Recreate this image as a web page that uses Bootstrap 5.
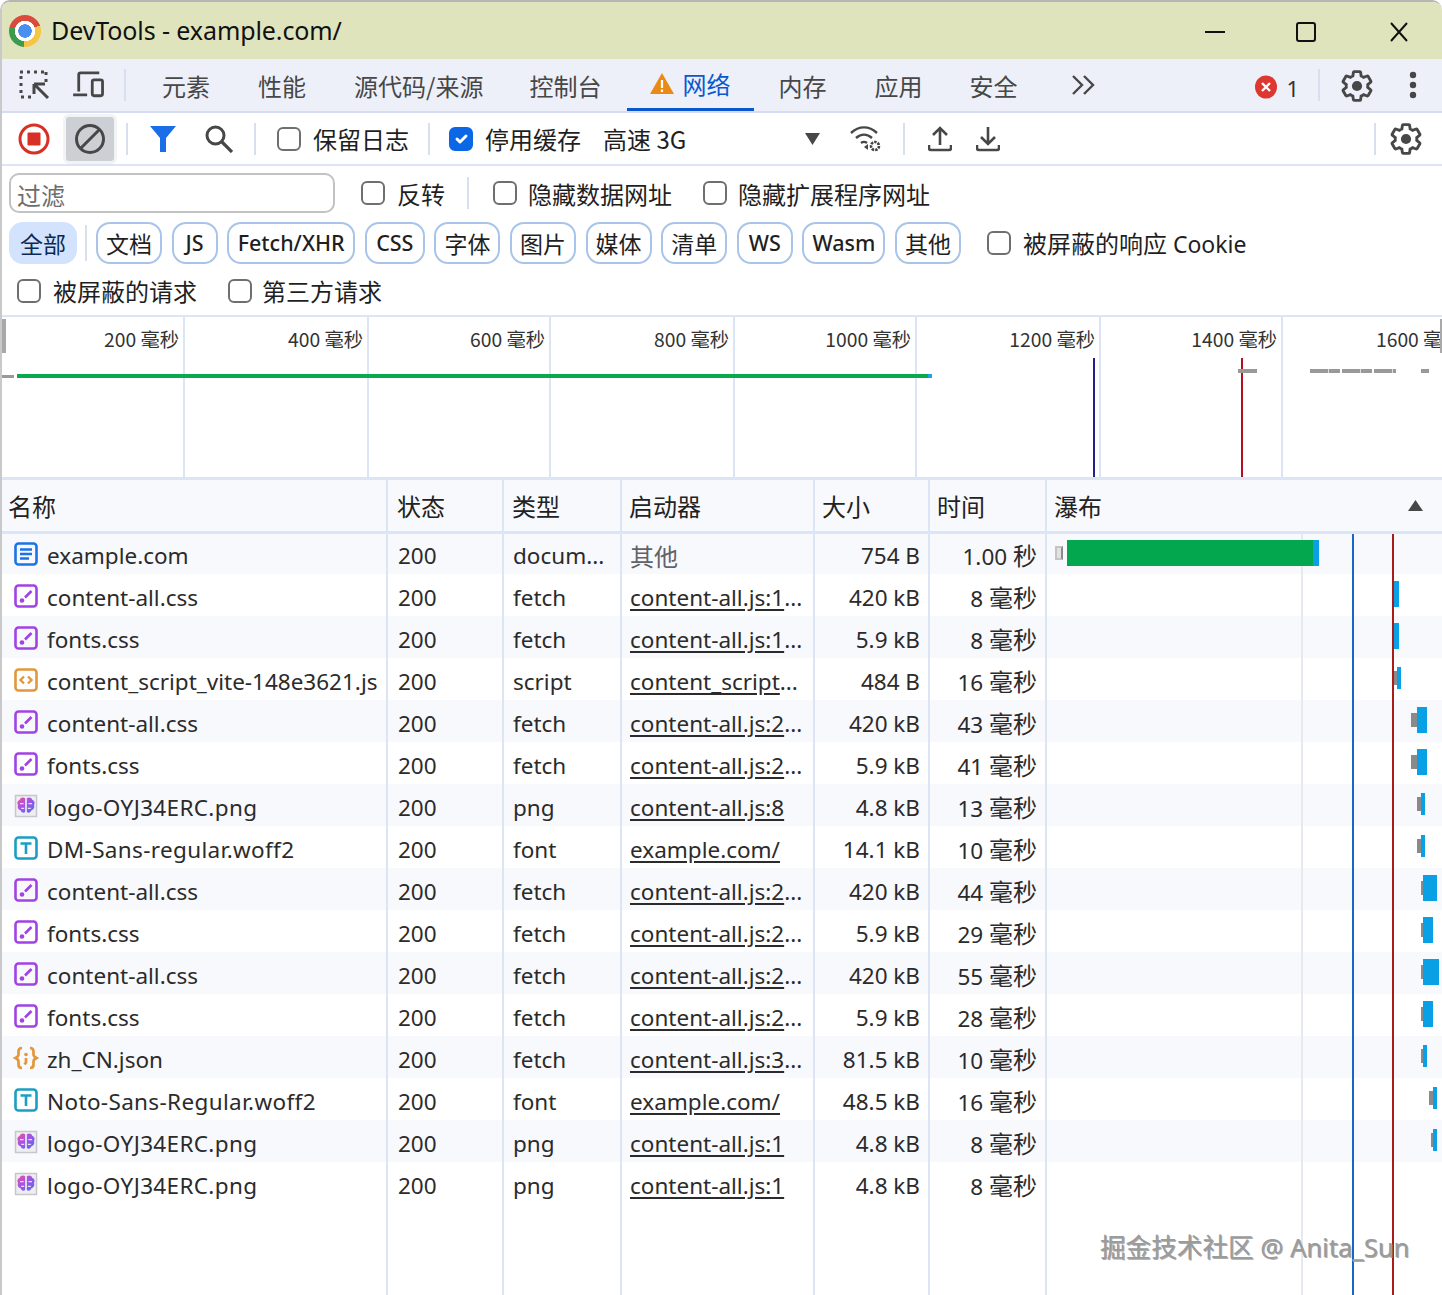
<!DOCTYPE html>
<html lang="zh-CN">
<head>
<meta charset="utf-8">
<title>DevTools - example.com/</title>
<link href="https://cdn.jsdelivr.net/npm/bootstrap@5.3.0/dist/css/bootstrap.min.css" rel="stylesheet">
<style>
html,body{height:100%;}
body{background:#fff;color:#1f1f1f;font-family:"Noto Sans","Noto Sans CJK SC",sans-serif;font-size:24px;line-height:32px;overflow:hidden;}
.zh{font-family:"Noto Sans CJK SC","Noto Sans",sans-serif;}
.app{width:1442px;height:1295px;border-left:2px solid #c9c9c9;border-top:2px solid #b5b5b5;border-radius:10px 10px 0 0;overflow:hidden;position:relative;margin:0;}
.titlebar{height:57px;background:#e0e4bd;color:#111;padding-left:7px;padding-right:33px;flex:none;}
.chrome-logo{width:32px;height:32px;border-radius:50%;flex:none;background:radial-gradient(circle,#4a8ff0 0 6.5px,#fff 7px 10px,transparent 10.5px),conic-gradient(#dc4a3c 0 70deg,#f6c544 70deg 185deg,#3b9c4e 185deg 285deg,#dc4a3c 285deg);}
.wintitle{margin-left:10px;margin-top:-2px;font-size:25px;letter-spacing:-.1px;}
.winbtn{width:20px;height:20px;color:#111;}
.winbtns{gap:71px;margin-top:3px;}
.dt-close{margin-left:2px;}
.tabbar{height:54px;background:#edf0f8;border-bottom:2px solid #d6dcf0;padding-left:16px;flex:none;}
.sep{width:2px;height:32px;background:#d8e0ef;flex:none;}
.tabitem{height:52px;padding:0 24px;color:#474747;line-height:54px;white-space:nowrap;font-size:24px;}
.tabactive{color:#0b57d0;border-bottom:3px solid #0b57d0;padding:0 24px 0 23px;}
.dt-tabshift{margin-left:-2px;margin-right:2px;}
.dt-tabshift2{margin-left:-1px;}
.ico-dark{color:#474747;}
.dt-err{margin-top:3px;}
.errcount{font-size:22px;color:#333;margin-left:9px;margin-top:5px;}
.toolbar{height:53px;border-bottom:2px solid #dbe5f5;padding-left:16px;padding-top:1px;flex:none;}
.clearbtn{width:48px;height:44px;background:#ccd0d5;border-radius:3px;box-shadow:0 0 0 3px #f1f3f5;}
.form-check-input.dt-check{width:24px;height:24px;margin:0;flex:none;border:2px solid #6f6f6f;border-radius:6px;background-color:#fff;float:none;}
.form-check-input.dt-check:checked{background-color:#0b67e6;border-color:#0b67e6;}
.checkline{display:flex;align-items:center;gap:12px;white-space:nowrap;margin:0;padding:0;min-height:0;}
.checkline.dt-gap11{gap:11px;}
.checkline.dt-gap10{gap:10px;}
.filterbar{height:50px;padding-left:7px;padding-top:4px;flex:none;}
.filterbar .checkline>span{padding-top:2px;}
.form-control.dt-filter{width:326px;height:40px;border:2px solid #c2c2c2;border-radius:10px;padding:3px 6px 0;font-size:24px;color:#222;background:#fff;}
.dt-filter::placeholder{color:#6d6d6d;opacity:1;}
.pillbar{height:52px;padding-left:7px;padding-top:4px;padding-bottom:2px;flex:none;}
.dt-pills{gap:9.6px;}
.btn.dt-pill{height:42px;padding:0;border:2px solid #a9c4ea;border-radius:14px;font-size:21.5px;font-weight:500;line-height:38px;color:#1f1f1f;background:#fff;font-family:inherit;white-space:nowrap;}
.btn.dt-pill.zh{padding:0;width:66px;font-size:23px;font-weight:400;font-family:"Noto Sans CJK SC",sans-serif;}
.btn.dt-pill.dt-pill-on{background:#d3e3fd;border-color:#d3e3fd;color:#0a2a55;width:68px;}
.btn.dt-pill.dt-w46{width:46px;}
.btn.dt-pill.dt-w128{width:128px;}
.btn.dt-pill.dt-w60{width:60px;}
.btn.dt-pill.dt-w56{width:56px;}
.btn.dt-pill.dt-w83{width:83px;}
.dt-cookie{font-size:23px;}
.dt-cookie .zh{font-size:24px;}
.thirdbar{height:49px;padding-left:15px;padding-top:5px;padding-bottom:6px;border-bottom:2px solid #dbe5f5;flex:none;}
.overview{height:163px;position:relative;border-bottom:3px solid #dbe5f5;flex:none;}
.ovcell{flex:none;height:100%;border-right:2px solid #dbe5f5;text-align:right;padding:7px 4px 0 0;font-size:19.3px;line-height:30px;color:#333;white-space:nowrap;overflow:visible;}
.ovmark{position:absolute;}
.dt-table-wrap{position:relative;flex:1 1 0;min-height:0;}
.table.dt-table{table-layout:fixed;width:1440px;margin:0;height:100%;--bs-table-striped-bg:#f8f9fd;--bs-table-striped-color:#2b2b2b;--bs-table-color:#2b2b2b;--bs-table-border-color:transparent;}
.dt-table th{height:52px;background:#f8f9fd;font-weight:400;font-size:24px;padding:1px 7px 0;border-right:2px solid #dbe5f5;border-bottom:3px solid #dbe5f5;vertical-align:middle;color:#222;}
.dt-table td{height:42px;padding:5px 8px 0 9px;border-right:2px solid #dbe5f5;border-bottom:0;font-size:22.5px;line-height:30px;vertical-align:middle;white-space:nowrap;overflow:hidden;color:#2b2b2b;}
.dt-table th:last-child,.dt-table td:last-child{border-right:0;position:relative;}
.dt-table th:first-child{padding-left:6px;}
.dt-table th:nth-child(2){padding-left:9px;}
.dt-table th:nth-child(3){padding-left:8px;}
.dt-table tr.dt-filler td{height:auto;box-shadow:none;}
.dt-table td .zh{font-size:24px;}
.table-striped>tbody>tr>td.dt-muted{color:#5f6368;font-size:24px;--bs-table-color-state:#5f6368;}
.dt-name{display:flex;align-items:center;gap:8px;margin-left:2px;}
.dt-wide{letter-spacing:.35px;}
.dt-ico{width:26px;height:26px;flex:none;margin-top:-4px;}
.dt-table a{color:#2b2b2b;text-decoration:underline;text-underline-offset:3px;}
.wfbar{position:absolute;z-index:1;top:7px;height:26px;}
.wfline{position:absolute;top:54px;bottom:0;pointer-events:none;}
.sortcaret{position:absolute;right:19px;top:20px;width:15px;height:11px;}
.watermark{position:absolute;left:1098px;top:1228px;z-index:3;font-size:25.6px;line-height:32px;color:#9b9b9b;text-shadow:1px 1px 0 #aaa;white-space:nowrap;}
.dt-sep-err{margin-left:19px;}
.dt-gear-top{margin-left:19px;margin-top:2px;}
.dt-dots{margin-left:34px;margin-right:25px;}
.dt-ml-clear{margin-left:16px;}
.dt-ml-13{margin-left:12px;}
.dt-ml-19{margin-left:19px;}
.dt-ml-21{margin-left:21px;}
.dt-ml-22{margin-left:22px;}
.dt-ml-23{margin-left:23px;}
.dt-ml-24{margin-left:24px;}
.dt-ml-25{margin-left:25px;}
.dt-ml-26{margin-left:26px;}
.dt-ml-29{margin-left:29px;}
.dt-ml-30{margin-left:30px;}
.dt-ml-31{margin-left:31px;}
.dt-mx-8{margin:0 9px 0 8px;height:36px;}
.dt-caret{margin-left:119px;}
.dt-right-tools{gap:12px;margin-right:18px;}
.dt-ov-first{width:183px;}
.dt-ov-184{width:184px;}
.dt-ov-182{width:182px;}
.dt-ov-last{width:158px;overflow:hidden;border-right:0;text-align:left;padding-left:93px;padding-right:0;}
.dt-ov-handle{left:0;top:2px;width:4px;height:34px;background:#a9a9a9;}
.dt-ov-handle2{left:1438px;top:2px;width:2px;height:34px;background:#a9a9a9;}
.dt-ov-tick1{left:0;top:58px;width:12px;height:3px;background:#999;}
.dt-ov-green{left:15px;top:57px;width:912px;height:4px;background:#0aa84f;}
.dt-ov-blue{left:926px;top:57px;width:4px;height:4px;background:#18a5e8;}
.dt-ov-navy{left:1091px;top:41px;bottom:0;width:2px;background:#22208e;}
.dt-ov-red{left:1239px;top:41px;bottom:0;width:2px;background:#b3101f;}
.dt-ov-g1{left:1236px;top:52px;width:19px;height:4px;background:#999;}
.dt-ov-g2{left:1308px;top:52px;width:86px;height:4px;background:repeating-linear-gradient(90deg,#999 0 18px,#ddd 18px 19px,#999 19px 30px,#fff 30px 32px);}
.dt-ov-g3{left:1419px;top:52px;width:8px;height:4px;background:#999;}
.dt-c1{width:385px;}.dt-c2{width:116px;}.dt-c3{width:118px;}.dt-c4{width:193px;}.dt-c5{width:115px;}.dt-c6{width:117px;}
.dt-table td:nth-child(2){padding-left:10px;}
.dt-table td:nth-child(3){padding-left:9px;}
.dt-table td:nth-child(4){padding-left:8px;}
.table-striped>tbody>tr.dt-filler>*,.table-striped>tbody>tr.dt-nostripe>*{--bs-table-bg-type:transparent;}
.dt-bl{background:#0aa0e6;}
.dt-gr{background:#8a8a8a;top:13px;height:14px;}
.dt-tall{top:7px;height:26px;}
.dt-short{top:9px;height:22px;}
.dt-wf-q{left:8px;width:8px;top:12px;height:14px;background:#e2e2e2;border:2px solid #c4c4c4;border-right-color:#8a8a8a;}
.wfbar.dt-wf-green{left:20px;width:246px;background:#03a84e;top:6px;}
.wfbar.dt-wf-greenend{left:266px;width:6px;background:#0aa0e6;top:6px;}
.dt-l-grid{left:1299px;width:2px;background:#e6e9f0;}
.dt-l-blue{left:1350px;width:2px;background:#1a66c8;z-index:2;}
.dt-l-red{left:1390px;width:2px;background:#a81c1c;z-index:2;}
</style>
</head>
<body>
<svg width="0" height="0" class="position-absolute">
<defs>
<symbol id="gear" viewBox="0 0 24 24"><path fill="none" stroke="currentColor" stroke-width="1.9" d="M19.14 12.94c.04-.3.06-.61.06-.94 0-.32-.02-.64-.07-.94l2.03-1.58c.18-.14.23-.41.12-.61l-1.92-3.32c-.12-.22-.37-.29-.59-.22l-2.39.96c-.5-.38-1.03-.7-1.62-.94l-.36-2.54c-.04-.24-.24-.41-.48-.41h-3.84c-.24 0-.43.17-.47.41l-.36 2.54c-.59.24-1.13.57-1.62.94l-2.39-.96c-.22-.08-.47 0-.59.22L2.74 8.87c-.12.21-.08.47.12.61l2.03 1.58c-.05.3-.09.63-.09.94s.02.64.07.94l-2.03 1.58c-.18.14-.23.41-.12.61l1.92 3.32c.12.22.37.29.59.22l2.39-.96c.5.38 1.03.7 1.62.94l.36 2.54c.05.24.24.41.48.41h3.84c.24 0 .44-.17.47-.41l.36-2.54c.59-.24 1.13-.56 1.62-.94l2.39.96c.22.08.47 0 .59-.22l1.92-3.32c.12-.22.07-.47-.12-.61l-2.01-1.58z"/><circle cx="12" cy="12" r="3.4" fill="currentColor"/></symbol>
<symbol id="f-doc" viewBox="0 0 26 26"><rect x="2.500" y="2.500" width="21" height="21" rx="3" fill="none" stroke="#1a73e8" stroke-width="2.600"/><path d="M7 8.500h12M7 13h12M7 17.500h9" stroke="#1a73e8" stroke-width="2.400" fill="none"/></symbol>
<symbol id="f-css" viewBox="0 0 26 26"><rect x="2.500" y="2.500" width="21" height="21" rx="3" fill="none" stroke="#a142e5" stroke-width="2.600"/><path d="M12 14.500L18.500 8" fill="none" stroke="#a142e5" stroke-width="2.600"/><circle cx="9" cy="17.500" r="2.300" fill="#a142e5"/></symbol>
<symbol id="f-js" viewBox="0 0 26 26"><rect x="2.500" y="2.500" width="21" height="21" rx="3" fill="none" stroke="#e2973a" stroke-width="2.600"/><path d="M11 9.500L7.500 13l3.500 3.500M15 9.500l3.500 3.500-3.500 3.500" fill="none" stroke="#e2973a" stroke-width="2.400"/></symbol>
<symbol id="f-font" viewBox="0 0 26 26"><rect x="2.500" y="2.500" width="21" height="21" rx="3" fill="none" stroke="#1a9fc4" stroke-width="2.600"/><path d="M7.500 8.500h11M13 8.500v10.500" fill="none" stroke="#1a9fc4" stroke-width="2.600"/></symbol>
<symbol id="f-json" viewBox="0 0 26 26"><path d="M9 3c-3 0-3.500 1.500-3.500 3.500v3c0 1.500-1 2.500-3 3.500 2 1 3 2 3 3.500v3c0 2 .5 3.500 3.500 3.500M17 3c3 0 3.500 1.500 3.500 3.500v3c0 1.500 1 2.500 3 3.500-2 1-3 2-3 3.500v3c0 2-.5 3.500-3.500 3.500" fill="none" stroke="#e2973a" stroke-width="2.700"/><circle cx="13" cy="9.500" r="1.800" fill="#e2973a"/><path d="M13 13v4.500l-1.500 2" fill="none" stroke="#e2973a" stroke-width="2.700"/></symbol>
<symbol id="f-png" viewBox="0 0 26 26"><defs><linearGradient id="brain" x1="0" x2="1" y1="0" y2="1"><stop offset="0" stop-color="#ef4fa6"/><stop offset=".5" stop-color="#9a56ea"/><stop offset="1" stop-color="#4b71f0"/></linearGradient></defs><rect x="2.500" y="2.500" width="21" height="21" fill="#eeeef2" stroke="#c6c6cc" stroke-width="1.500"/><g transform="translate(-2.600 -2.600) scale(1.200)"><path d="M12.300 6.500c-2-1.200-4.300-.4-4.600 1.500-1.800.6-2.500 2.700-1.300 4.200-.9 1.900.2 4 2.100 4.300.5 1.900 2.400 2.600 3.800 1.500zM13.700 6.500c2-1.200 4.300-.4 4.600 1.500 1.800.6 2.500 2.700 1.300 4.200.9 1.900-.2 4-2.100 4.300-.5 1.900-2.400 2.600-3.800 1.500z" fill="url(#brain)"/><path d="M8 11h3M15 11h3M9 15h2.500M14.500 15H17" stroke="#f6d9f5" stroke-width="1"/></g></symbol>
</defs>
</svg>
<div class="app d-flex flex-column">
  <header class="titlebar d-flex align-items-center justify-content-between">
    <div class="d-flex align-items-center">
      <span class="chrome-logo"></span>
      <span class="wintitle">DevTools - example.com/</span>
    </div>
    <div class="d-flex align-items-center winbtns">
      <svg class="winbtn" viewBox="0 0 20 20"><path d="M0 10h20" stroke="currentColor" stroke-width="2"/></svg>
      <svg class="winbtn" viewBox="0 0 20 20"><rect x="1" y="1" width="18" height="18" rx="2" fill="none" stroke="currentColor" stroke-width="2"/></svg>
      <svg class="winbtn dt-close" viewBox="0 0 20 20"><path d="M2 1l16 18M18 1L2 19" stroke="currentColor" stroke-width="2" fill="none"/></svg>
    </div>
  </header>

  <nav class="tabbar d-flex align-items-center">
    <svg class="ico-dark" width="32" height="32" viewBox="0 0 32 32"><path d="M2 3h3M9 3h3M16 3h3M23 3h3M28 3v3M28 10v3M3 7v3M3 14v3M3 21v3M3 28h3M10 28h3" fill="none" stroke="currentColor" stroke-width="3"/><path d="M16 15h11M16 15v10M16 15l14 14" fill="none" stroke="currentColor" stroke-width="3"/></svg>
    <svg class="ico-dark dt-ml-23" width="32" height="28" viewBox="0 0 34 30"><path d="M6 22V4a2 2 0 0 1 2-2h20" fill="none" stroke="currentColor" stroke-width="3"/><path d="M0 24h15v3H0z" fill="currentColor"/><rect x="20.500" y="9.500" width="11" height="17" rx="2" fill="none" stroke="currentColor" stroke-width="3"/></svg>
    <span class="sep dt-ml-19 me-2"></span>
    <span class="tabitem zh ms-1">元素</span>
    <span class="tabitem zh">性能</span>
    <span class="tabitem zh">源代码/来源</span>
    <span class="tabitem zh dt-tabshift">控制台</span>
    <span class="tabitem tabactive zh d-flex align-items-center gap-2">
      <svg width="24" height="22" viewBox="0 0 24 22"><path d="M12 0l12 21H0z" fill="#e98a15"/><path d="M12 7v8M12 16.500v2.500" stroke="#fff" stroke-width="2.200"/></svg>
      网络
    </span>
    <span class="tabitem zh">内存</span>
    <span class="tabitem zh">应用</span>
    <span class="tabitem zh dt-tabshift2">安全</span>
    <svg class="ico-dark dt-ml-30" width="26" height="22" viewBox="0 0 26 22"><path d="M2 2l9 9-9 9M13 2l9 9-9 9" fill="none" stroke="currentColor" stroke-width="2.400"/></svg>
    <div class="ms-auto d-flex align-items-center">
      <svg class="dt-err" width="22" height="24" viewBox="0 0 22 24"><ellipse cx="11" cy="12" rx="11" ry="11.500" fill="#de3730"/><path d="M7 8l8 8M15 8l-8 8" stroke="#fff" stroke-width="2.400"/></svg>
      <span class="errcount">1</span>
      <span class="sep dt-sep-err"></span>
      <svg class="ico-dark dt-gear-top" width="36" height="36"><use href="#gear"/></svg>
      <svg class="ico-dark dt-dots" width="8" height="28" viewBox="0 0 8 28"><circle cx="4" cy="4" r="3.200" fill="currentColor"/><circle cx="4" cy="14" r="3.200" fill="currentColor"/><circle cx="4" cy="24" r="3.200" fill="currentColor"/></svg>
    </div>
  </nav>

  <div class="toolbar d-flex align-items-center">
    <svg width="32" height="32" viewBox="0 0 32 32"><circle cx="16" cy="16" r="14" fill="#fff" stroke="#d93025" stroke-width="3"/><rect x="9.500" y="9.500" width="13" height="13" rx="1" fill="#d93025"/></svg>
    <span class="clearbtn d-flex align-items-center justify-content-center dt-ml-clear">
      <svg class="ico-dark" width="32" height="32" viewBox="0 0 32 32"><circle cx="16" cy="16" r="13.500" fill="none" stroke="currentColor" stroke-width="3"/><path d="M7 25L25 7" stroke="currentColor" stroke-width="3"/></svg>
    </span>
    <span class="sep dt-ml-13"></span>
    <svg class="dt-ml-22" width="26" height="26" viewBox="0 0 26 26"><path d="M0 0h26L16 12v14h-6V12z" fill="#1a6fe8"/></svg>
    <svg class="ico-dark dt-ml-29" width="28" height="28" viewBox="0 0 28 28"><circle cx="10.500" cy="10.500" r="8.500" fill="none" stroke="currentColor" stroke-width="3"/><path d="M17 17l10 10" stroke="currentColor" stroke-width="3.200"/></svg>
    <span class="sep dt-ml-21"></span>
    <label class="checkline zh dt-ml-21"><input class="form-check-input dt-check" type="checkbox"><span>保留日志</span></label>
    <span class="sep dt-ml-19"></span>
    <label class="checkline zh dt-ml-19"><input class="form-check-input dt-check" type="checkbox" checked><span>停用缓存</span></label>
    <span class="zh dt-ml-22">高速 3G</span>
    <svg class="dt-caret" width="15" height="12" viewBox="0 0 15 12"><path d="M0 0h15L7.500 12z" fill="#474747"/></svg>
    <svg class="ico-dark dt-ml-29" width="32" height="28" viewBox="0 0 32 28"><path d="M2 8c8-7.500 18-7.500 26 0M7 13c5-4.500 11-4.500 16 0M12 18c2-1.500 4-1.500 6 0" fill="none" stroke="currentColor" stroke-width="2.400"/><path d="M15 22l4-3v6z" fill="currentColor"/><circle cx="26" cy="21" r="4" fill="none" stroke="currentColor" stroke-width="2.600" stroke-dasharray="2.500 1"/></svg>
    <span class="sep dt-ml-22"></span>
    <svg class="ico-dark dt-ml-23" width="24" height="26" viewBox="0 0 24 26"><path d="M12 19V2M5 9l7-7 7 7" fill="none" stroke="currentColor" stroke-width="2.600"/><path d="M1 19v3a2 2 0 0 0 2 2h18a2 2 0 0 0 2-2v-3" fill="none" stroke="currentColor" stroke-width="2.600"/></svg>
    <svg class="ico-dark dt-ml-24" width="24" height="26" viewBox="0 0 24 26"><path d="M12 1v17M5 11l7 7 7-7" fill="none" stroke="currentColor" stroke-width="2.600"/><path d="M1 19v3a2 2 0 0 0 2 2h18a2 2 0 0 0 2-2v-3" fill="none" stroke="currentColor" stroke-width="2.600"/></svg>
    <div class="ms-auto d-flex align-items-center dt-right-tools">
      <span class="sep"></span>
      <svg class="ico-dark" width="36" height="36"><use href="#gear"/></svg>
    </div>
  </div>

  <div class="filterbar d-flex align-items-center">
    <input class="form-control dt-filter zh" type="text" placeholder="过滤">
    <label class="checkline zh dt-ml-26"><input class="form-check-input dt-check" type="checkbox"><span>反转</span></label>
    <span class="sep dt-ml-22"></span>
    <label class="checkline dt-gap11 zh dt-ml-24"><input class="form-check-input dt-check" type="checkbox"><span>隐藏数据网址</span></label>
    <label class="checkline dt-gap11 zh dt-ml-31"><input class="form-check-input dt-check" type="checkbox"><span>隐藏扩展程序网址</span></label>
  </div>

  <div class="pillbar d-flex align-items-center">
    <button class="btn dt-pill dt-pill-on zh">全部</button>
    <span class="sep dt-mx-8"></span>
    <div class="d-flex dt-pills">
      <button class="btn dt-pill zh">文档</button>
      <button class="btn dt-pill dt-w46">JS</button>
      <button class="btn dt-pill dt-w128">Fetch/XHR</button>
      <button class="btn dt-pill dt-w60">CSS</button>
      <button class="btn dt-pill zh">字体</button>
      <button class="btn dt-pill zh">图片</button>
      <button class="btn dt-pill zh">媒体</button>
      <button class="btn dt-pill zh">清单</button>
      <button class="btn dt-pill dt-w56">WS</button>
      <button class="btn dt-pill dt-w83">Wasm</button>
      <button class="btn dt-pill zh">其他</button>
    </div>
    <label class="checkline dt-ml-26"><input class="form-check-input dt-check" type="checkbox"><span class="dt-cookie"><span class="zh">被屏蔽的响应</span> Cookie</span></label>
  </div>

  <div class="thirdbar d-flex align-items-center">
    <label class="checkline zh"><input class="form-check-input dt-check" type="checkbox"><span>被屏蔽的请求</span></label>
    <label class="checkline dt-gap10 zh dt-ml-31"><input class="form-check-input dt-check" type="checkbox"><span>第三方请求</span></label>
  </div>

  <section class="overview d-flex">
    <div class="ovcell dt-ov-first"><span class="zh">200 毫秒</span></div>
    <div class="ovcell dt-ov-184"><span class="zh">400 毫秒</span></div>
    <div class="ovcell dt-ov-182"><span class="zh">600 毫秒</span></div>
    <div class="ovcell dt-ov-184"><span class="zh">800 毫秒</span></div>
    <div class="ovcell dt-ov-182"><span class="zh">1000 毫秒</span></div>
    <div class="ovcell dt-ov-184"><span class="zh">1200 毫秒</span></div>
    <div class="ovcell dt-ov-182"><span class="zh">1400 毫秒</span></div>
    <div class="ovcell dt-ov-last"><span class="zh">1600 毫秒</span></div>
    <span class="ovmark dt-ov-handle"></span>
    <span class="ovmark dt-ov-handle2"></span>
    <span class="ovmark dt-ov-tick1"></span>
    <span class="ovmark dt-ov-green"></span>
    <span class="ovmark dt-ov-blue"></span>
    <span class="ovmark dt-ov-navy"></span>
    <span class="ovmark dt-ov-red"></span>
    <span class="ovmark dt-ov-g1"></span>
    <span class="ovmark dt-ov-g2"></span>
    <span class="ovmark dt-ov-g3"></span>
  </section>

  <div class="dt-table-wrap">
    <table class="table table-striped dt-table">
      <colgroup><col class="dt-c1"><col class="dt-c2"><col class="dt-c3"><col class="dt-c4"><col class="dt-c5"><col class="dt-c6"><col></colgroup>
      <thead>
        <tr>
          <th class="zh">名称</th><th class="zh">状态</th><th class="zh">类型</th><th class="zh">启动器</th><th class="zh">大小</th><th class="zh">时间</th>
          <th class="zh">瀑布<svg class="sortcaret" viewBox="0 0 15 11"><path d="M7.500 0L15 11H0z" fill="#474747"/></svg></th>
        </tr>
      </thead>
      <tbody>
        <tr><td><div class="dt-name"><svg class="dt-ico"><use href="#f-doc"/></svg>example.com</div></td><td>200</td><td>docum...</td><td class="zh dt-muted">其他</td><td class="text-end">754 B</td><td class="text-end">1.00 <span class="zh">秒</span></td><td>
          <span class="wfbar dt-wf-q"></span><span class="wfbar dt-wf-green"></span><span class="wfbar dt-wf-greenend"></span></td></tr>
        <tr><td><div class="dt-name"><svg class="dt-ico"><use href="#f-css"/></svg>content-all.css</div></td><td>200</td><td>fetch</td><td><a href="#">content-all.js:1</a>...</td><td class="text-end">420 kB</td><td class="text-end">8 <span class="zh">毫秒</span></td><td>
          <span class="wfbar dt-bl dt-tall" style="left:346px;width:6px"></span></td></tr>
        <tr><td><div class="dt-name"><svg class="dt-ico"><use href="#f-css"/></svg>fonts.css</div></td><td>200</td><td>fetch</td><td><a href="#">content-all.js:1</a>...</td><td class="text-end">5.9 kB</td><td class="text-end">8 <span class="zh">毫秒</span></td><td>
          <span class="wfbar dt-bl dt-tall" style="left:346px;width:6px"></span></td></tr>
        <tr><td><div class="dt-name"><svg class="dt-ico"><use href="#f-js"/></svg>content_script_vite-148e3621.js</div></td><td>200</td><td>script</td><td><a href="#">content_script</a>...</td><td class="text-end">484 B</td><td class="text-end">16 <span class="zh">毫秒</span></td><td>
          <span class="wfbar dt-gr" style="left:347px;width:3px"></span><span class="wfbar dt-bl dt-short" style="left:350px;width:4px"></span></td></tr>
        <tr><td><div class="dt-name"><svg class="dt-ico"><use href="#f-css"/></svg>content-all.css</div></td><td>200</td><td>fetch</td><td><a href="#">content-all.js:2</a>...</td><td class="text-end">420 kB</td><td class="text-end">43 <span class="zh">毫秒</span></td><td>
          <span class="wfbar dt-gr" style="left:364px;width:6px"></span><span class="wfbar dt-bl dt-tall" style="left:370px;width:10px"></span></td></tr>
        <tr><td><div class="dt-name"><svg class="dt-ico"><use href="#f-css"/></svg>fonts.css</div></td><td>200</td><td>fetch</td><td><a href="#">content-all.js:2</a>...</td><td class="text-end">5.9 kB</td><td class="text-end">41 <span class="zh">毫秒</span></td><td>
          <span class="wfbar dt-gr" style="left:364px;width:6px"></span><span class="wfbar dt-bl dt-tall" style="left:370px;width:10px"></span></td></tr>
        <tr><td><div class="dt-name"><svg class="dt-ico"><use href="#f-png"/></svg><span class="dt-wide">logo-OYJ34ERC.png</span></div></td><td>200</td><td>png</td><td><a href="#">content-all.js:8</a></td><td class="text-end">4.8 kB</td><td class="text-end">13 <span class="zh">毫秒</span></td><td>
          <span class="wfbar dt-gr" style="left:370px;width:4px"></span><span class="wfbar dt-bl dt-short" style="left:374px;width:4px"></span></td></tr>
        <tr><td><div class="dt-name"><svg class="dt-ico"><use href="#f-font"/></svg><span class="dt-wide">DM-Sans-regular.woff2</span></div></td><td>200</td><td>font</td><td><a href="#">example.com/</a></td><td class="text-end">14.1 kB</td><td class="text-end">10 <span class="zh">毫秒</span></td><td>
          <span class="wfbar dt-gr" style="left:370px;width:4px"></span><span class="wfbar dt-bl dt-short" style="left:374px;width:4px"></span></td></tr>
        <tr><td><div class="dt-name"><svg class="dt-ico"><use href="#f-css"/></svg>content-all.css</div></td><td>200</td><td>fetch</td><td><a href="#">content-all.js:2</a>...</td><td class="text-end">420 kB</td><td class="text-end">44 <span class="zh">毫秒</span></td><td>
          <span class="wfbar dt-gr" style="left:374px;width:2px"></span><span class="wfbar dt-bl dt-tall" style="left:376px;width:14px"></span></td></tr>
        <tr><td><div class="dt-name"><svg class="dt-ico"><use href="#f-css"/></svg>fonts.css</div></td><td>200</td><td>fetch</td><td><a href="#">content-all.js:2</a>...</td><td class="text-end">5.9 kB</td><td class="text-end">29 <span class="zh">毫秒</span></td><td>
          <span class="wfbar dt-gr" style="left:374px;width:2px"></span><span class="wfbar dt-bl dt-tall" style="left:376px;width:10px"></span></td></tr>
        <tr><td><div class="dt-name"><svg class="dt-ico"><use href="#f-css"/></svg>content-all.css</div></td><td>200</td><td>fetch</td><td><a href="#">content-all.js:2</a>...</td><td class="text-end">420 kB</td><td class="text-end">55 <span class="zh">毫秒</span></td><td>
          <span class="wfbar dt-gr" style="left:374px;width:2px"></span><span class="wfbar dt-bl dt-tall" style="left:376px;width:16px"></span></td></tr>
        <tr><td><div class="dt-name"><svg class="dt-ico"><use href="#f-css"/></svg>fonts.css</div></td><td>200</td><td>fetch</td><td><a href="#">content-all.js:2</a>...</td><td class="text-end">5.9 kB</td><td class="text-end">28 <span class="zh">毫秒</span></td><td>
          <span class="wfbar dt-gr" style="left:374px;width:2px"></span><span class="wfbar dt-bl dt-tall" style="left:376px;width:10px"></span></td></tr>
        <tr><td><div class="dt-name"><svg class="dt-ico"><use href="#f-json"/></svg>zh_CN.json</div></td><td>200</td><td>fetch</td><td><a href="#">content-all.js:3</a>...</td><td class="text-end">81.5 kB</td><td class="text-end">10 <span class="zh">毫秒</span></td><td>
          <span class="wfbar dt-gr" style="left:374px;width:2px"></span><span class="wfbar dt-bl dt-short" style="left:376px;width:4px"></span></td></tr>
        <tr><td><div class="dt-name"><svg class="dt-ico"><use href="#f-font"/></svg><span class="dt-wide">Noto-Sans-Regular.woff2</span></div></td><td>200</td><td>font</td><td><a href="#">example.com/</a></td><td class="text-end">48.5 kB</td><td class="text-end">16 <span class="zh">毫秒</span></td><td>
          <span class="wfbar dt-gr" style="left:382px;width:4px"></span><span class="wfbar dt-bl dt-short" style="left:386px;width:4px"></span></td></tr>
        <tr><td><div class="dt-name"><svg class="dt-ico"><use href="#f-png"/></svg><span class="dt-wide">logo-OYJ34ERC.png</span></div></td><td>200</td><td>png</td><td><a href="#">content-all.js:1</a></td><td class="text-end">4.8 kB</td><td class="text-end">8 <span class="zh">毫秒</span></td><td>
          <span class="wfbar dt-gr" style="left:384px;width:2px"></span><span class="wfbar dt-bl dt-short" style="left:386px;width:4px"></span></td></tr>
        <tr class="dt-nostripe"><td><div class="dt-name"><svg class="dt-ico"><use href="#f-png"/></svg><span class="dt-wide">logo-OYJ34ERC.png</span></div></td><td>200</td><td>png</td><td><a href="#">content-all.js:1</a></td><td class="text-end">4.8 kB</td><td class="text-end">8 <span class="zh">毫秒</span></td><td></td></tr>
        <tr class="dt-filler"><td></td><td></td><td></td><td></td><td></td><td></td><td></td></tr>
      </tbody>
    </table>
    <span class="wfline dt-l-grid"></span>
    <span class="wfline dt-l-blue"></span>
    <span class="wfline dt-l-red"></span>
  </div>
  <div class="watermark"><span class="zh">掘金技术社区</span> @ Anita_Sun</div>
</div>
<script src="https://cdn.jsdelivr.net/npm/bootstrap@5.3.0/dist/js/bootstrap.bundle.min.js"></script>
</body>
</html>
